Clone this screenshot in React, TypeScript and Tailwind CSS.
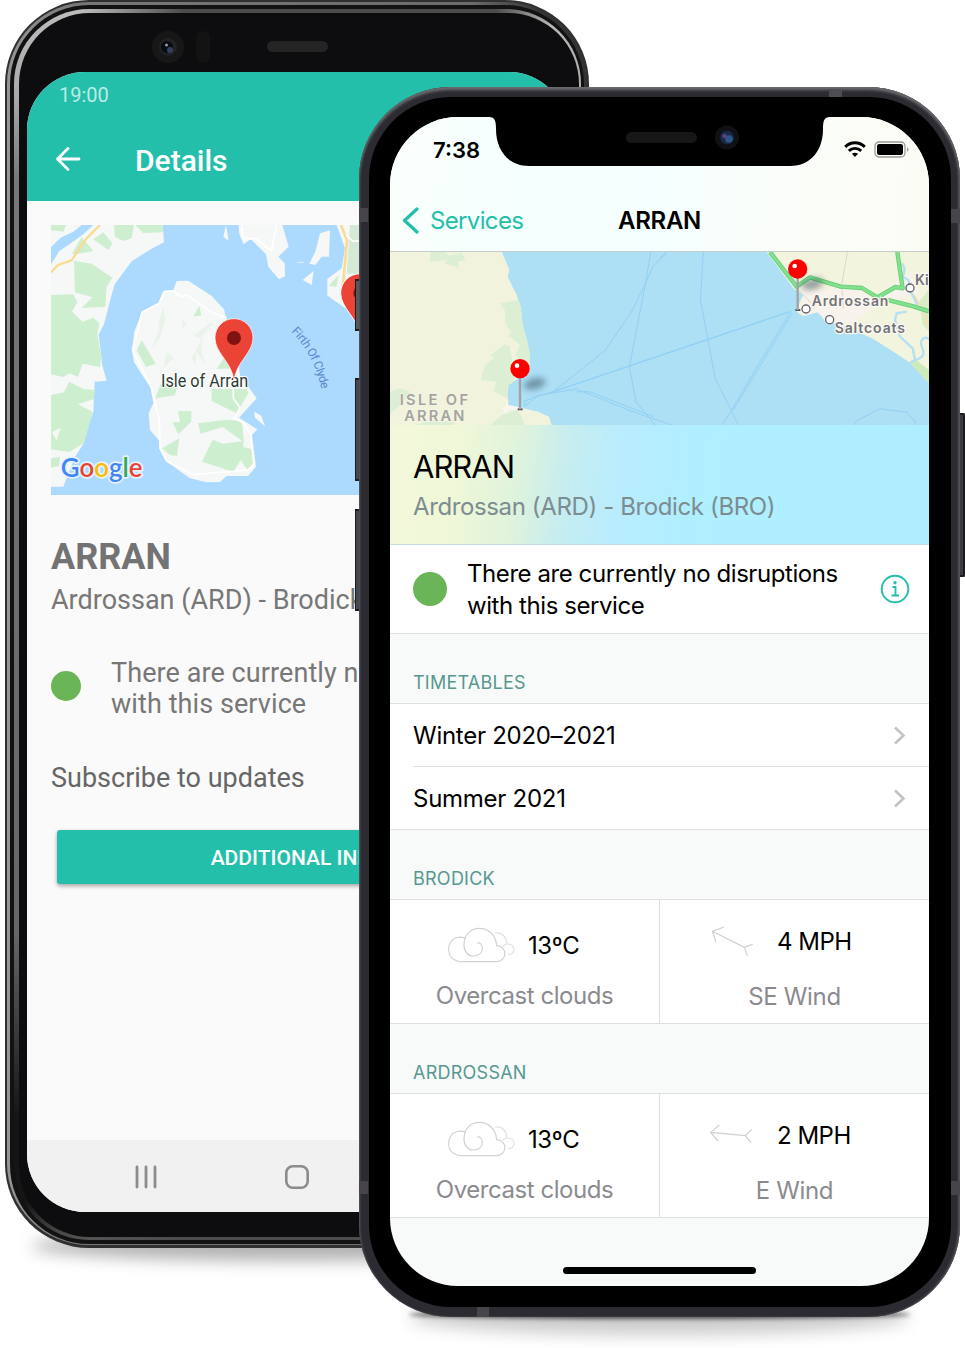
import type { ReactNode } from 'react';

function GoogleMap() {
  return (
    <svg className="block h-[270px] w-[492px]" viewBox="33 30 1476 810" preserveAspectRatio="none">
      <rect x="33" y="30" width="1476" height="810" fill="#acdaff" />
      <path d="M33 30H368L372 82L340 98L276 138L224 208L212 250L192 328L176 358L184 425L186 448L200 497L164 500L160 590L146 630L132 684L105 725L70 815L33 815Z" fill="#f6f7f7" />
      <path d="M33 96L62 68L100 50L125 30H160L130 58L85 90L58 108L33 148Z" fill="#acdaff" />
      <g fill="#cdeecf">
        <path d="M33 30H78L70 50L33 46Z" />
        <path d="M95 118L125 66L160 108L125 115Z" />
        <path d="M160 73L190 52L218 86L205 105Z" />
        <path d="M222 30H282L275 70L250 78L225 65Z" />
        <path d="M286 30H368V52L310 54Z" />
        <path d="M102 137L155 146L217 188L200 215L196 275L125 279L158 247L105 232Z" />
        <path d="M33 240L100 238L112 262L96 290L128 320L160 308L178 325L172 358L184 425L180 456L128 446L114 485L88 475L70 486L33 478Z" />
        <path d="M33 540L72 532L88 500L130 522L164 525L162 552L113 568L158 590L132 684L88 711L33 703Z" />
        <path d="M33 730L60 725L58 752L33 758Z" />
      </g>
      <path d="M36 652L62 638L50 676Z" fill="#f6f7f7" />
      <path d="M33 172L54 150L95 136L138 72L180 30" fill="none" stroke="#f9dc8e" strokeWidth="7" />
      <path d="M410 198L445 197L515 243L552 283L560 315L590 400L600 480L650 550L597 608L652 643L636 660L648 755L624 783H560L540 801L500 802L450 790L380 740L360 705L360 680L330 645L326 595L340 565L332 518L282 442L276 405L283 350L306 292L355 265L370 227L400 225Z" fill="#f6f7f7" />
      <g fill="#cdeecf">
        <path d="M305 376L347 446L318 456L290 406Z" />
        <path d="M362 506L412 518L404 541L346 550Z" />
        <path d="M414 589L454 588V620L415 658L397 621L420 622Z" />
        <path d="M478 273L484 302L460 304Z" />
        <path d="M558 420L590 460L530 462Z" />
        <path d="M515 522L620 522L625 535L590 595L515 558Z" />
        <path d="M474 625L562 614L605 618L612 682L548 636L482 656Z" />
        <path d="M518 674L548 686L610 678V696L634 702L640 742L622 764L602 735L580 770L486 740Z" />
        <path d="M366 700L418 670L411 723L390 720Z" />
      </g>
      <g fill="#eaf3e9">
        <path d="M370 278L377 310L360 370L335 400L355 350L358 310Z" />
        <path d="M425 315L440 325L428 342Z" />
        <path d="M460 362L510 323L520 326L480 370Z" />
        <path d="M490 360L483 400L495 450L470 410L465 450L455 430Z" />
        <path d="M380 410L400 430L370 460Z" />
      </g>
      <path d="M374 230L400 228L424 246L440 240L512 290L560 310M370 238L357 265L306 292L278 405L334 518L358 616L360 700L380 738L460 779L624 765L642 750L632 660L612 625L583 610L600 578L580 550V520" fill="none" stroke="#fff" strokeWidth="5" strokeLinejoin="round" />
      <path d="M642 590L664 602L675 634L645 608Z" fill="#f6f7f7" />
      <path d="M596 30L598 58L611 88L632 72L678 118L685 155L717 193L735 184L734 145L715 125L746 95L727 30ZM558 30L550 65L566 77ZM840 55L870 46L867 125H845L826 150L808 146L826 110ZM821 168L788 195L815 210Z" fill="#f6f7f7" />
      <path d="M604 36L610 70L650 72L694 108L710 30" fill="none" stroke="#fff" strokeWidth="5" />
      <path d="M772 142H792" stroke="#dceeff" strokeWidth="3" />
      <path d="M890 30H1509V840H1030L1000 500L930 290L862 242V192L905 160L915 100Z" fill="#f6f7f7" />
      <path d="M862 242L930 290L990 360L1030 840H900V300Z" fill="#acdaff" />
      <path d="M930 30H1000V176H920Z" fill="#d5ead6" />
      <path d="M896 180L890 215L866 212Z" fill="#cdeecf" />
      <path d="M903 30L921 76L909 210" fill="none" stroke="#f9dc8e" strokeWidth="8" />
      <path d="M918 60L938 78H965" fill="none" stroke="#fff" strokeWidth="5" />
      <path d="M960 362C955 310 902 280 902 234A58 58 0 0 1 1018 234C1018 280 965 310 960 362Z" fill="#eb4336" stroke="#fff" strokeWidth="3" />
      <circle cx="960" cy="234" r="20" fill="#7e1311" />
      <path id="firth" d="M754 350Q830 425 852 560" fill="none" />
      <text fill="#5b86cf" fontSize="36" fontFamily="Roboto, sans-serif" letterSpacing="-1.5"><textPath href="#firth">Firth Of Clyde</textPath></text>
      <text x="363" y="515" fill="#2b3b31" stroke="#fff" strokeWidth="6" paintOrder="stroke" fontSize="53" textLength="262" lengthAdjust="spacingAndGlyphs" fontFamily="Roboto, sans-serif">Isle of Arran</text>
      <path d="M582 498C576 440 525 415 525 368A57 57 0 0 1 639 368C639 415 588 440 582 498Z" fill="#eb4336" stroke="#fff" strokeWidth="2" />
      <circle cx="582" cy="369" r="21" fill="#7e1311" />
      <text x="62" y="786" fontSize="78" textLength="245" lengthAdjust="spacingAndGlyphs" fontFamily="Lato, 'Open Sans', sans-serif" fontWeight="600" stroke="#e6f3ff" strokeWidth="10" strokeLinejoin="round" paintOrder="stroke">
        <tspan fill="#4285f4">G</tspan><tspan fill="#ea4335">o</tspan><tspan fill="#fbbc05">o</tspan><tspan fill="#4285f4">g</tspan><tspan fill="#34a853">l</tspan><tspan fill="#ea4335">e</tspan>
      </text>
    </svg>
  );
}

function Pin({ x, y, h }: { x: number; y: number; h: number }) {
  return (
    <g>
      <ellipse cx={x + 44} cy={y + 45} rx="34" ry="16" fill="#33475a" opacity="0.5" filter="url(#soft)" transform={`rotate(-14 ${x + 44} ${y + 45})`} />
      <path d={`M${x - 7} ${y + h}H${x + 8}`} stroke="#555" strokeWidth="6" />
      <path d={`M${x} ${y}V${y + h}`} stroke="#a3a3a5" strokeWidth="7" />
      <circle cx={x} cy={y} r="29" fill="#fc0000" />
      <circle cx={x - 9} cy={y - 9} r="7" fill="#fff" />
    </g>
  );
}

function AppleMap() {
  return (
    <svg className="block h-[173px] w-[539px] shrink-0" viewBox="30 21 1617 519" preserveAspectRatio="none">
      <defs><filter id="soft" x="-50%" y="-80%" width="200%" height="260%"><feGaussianBlur stdDeviation="9" /></filter></defs>
      <rect x="30" y="21" width="1617" height="519" fill="#addff5" />
      <g fill="none" stroke="#92d0f3" strokeWidth="3">
        <path d="M432 486L470 455L520 440L675 317L752 205L792 125L820 62L860 24" />
        <path d="M812 21L795 125L748 365L768 470L825 540" />
        <path d="M520 440L1230 200" strokeWidth="4" />
        <path d="M434 480V468L480 450L590 432L750 497L880 542M590 440H628L820 515" />
        <path d="M970 21L961 165L1006 400L1075 540" />
        <path d="M1232 200L1140 350L1055 495L1026 540M1236 205L1060 495" />
        <path d="M1422 540L1430 527L1500 491L1580 502L1606 530V540M840 38L858 22" />
      </g>
      <path d="M30 21H366L388 75L383 95L410 150L422 185L428 240L442 290L449 325V360L408 405L385 420L382 455L386 470L380 490L430 490L475 500L507 515L515 540H30Z" fill="#f2f3dc" />
      <g fill="#dcefd5">
        <path d="M150 21H195L210 32L245 22L257 45L233 50L236 68L192 55L205 45L150 50Z" />
        <path d="M361 175L414 164L422 185L428 240L442 290L449 325V360L430 350L405 330L420 300L390 275H380L396 262L378 240L374 195Z" />
        <path d="M374 298L388 302L396 340L395 385L405 400L382 424V460L340 438L350 410L302 404L315 360L342 340L333 330Z" />
        <path d="M30 440L60 430L95 442L55 485L30 508ZM105 540L150 528L222 530V540ZM332 540L365 510L410 494L425 515L434 540Z" />
      </g>
      <path d="M375 455L380 482L366 490L378 506L390 493L430 500V488L385 480Z" fill="#f8f6f1" />
      <path d="M1160 21H1647V415L1610 375L1590 353L1540 320L1480 282L1400 245L1340 228L1310 200L1275 210L1268 213L1250 200L1262 160L1215 95Z" fill="#f3f4de" />
      <path d="M1262 120L1292 135L1430 130L1480 160L1520 130L1590 85L1620 140L1500 180L1420 230L1372 230L1340 238L1332 225L1318 200L1275 212L1258 200L1268 160Z" fill="#f8f2ec" />
      <path d="M1240 130L1270 150L1254 180L1240 178Z" fill="#addff5" />
      <path d="M1648 130L1618 170L1628 240L1648 260Z" fill="#d9ecc5" />
      <path d="M1590 353L1610 346L1647 375V415Z" fill="#ccebb9" />
      <path d="M1402 22L1385 120L1390 190M1255 135L1300 180" stroke="#d9d9cd" strokeWidth="3" fill="none" />
      <path d="M1603 150L1636 210L1647 250" stroke="#fbdcae" strokeWidth="5" fill="none" />
      <path d="M1590 353L1605 345L1598 310L1560 275L1545 225L1550 205L1580 200M1605 345C1660 330 1605 300 1630 280Q1645 275 1647 285M1565 55Q1580 70 1568 95L1585 105L1595 145L1612 180" stroke="#b3e0f3" strokeWidth="7" fill="none" />
      <g fill="none" strokeLinejoin="round">
        <path d="M1170 21L1250 125L1290 97L1382 125L1446 129L1492 157L1600 184L1647 199M1492 157L1546 126L1568 130L1552 21" stroke="#64cc76" strokeWidth="13" />
        <path d="M1170 21L1250 125L1290 97L1382 125L1446 129L1492 157L1600 184L1647 199M1492 157L1546 126L1568 130L1552 21" stroke="#83e18e" strokeWidth="8" />
      </g>
      <Pin x={420} y={371} h={122} />
      <Pin x={1253} y={72} h={123} />
      <g fill="#fff" stroke="#646467" strokeWidth="4">
        <circle cx="1278" cy="192" r="12" /><circle cx="1349" cy="224" r="12" /><circle cx="1590" cy="129" r="12" />
      </g>
      <g fontFamily="Inter, sans-serif" fill="#737378" stroke="#fbf9f2" strokeWidth="7" strokeLinejoin="round" paintOrder="stroke" fontSize="42" fontWeight="600">
        <text x="1295" y="184" textLength="230">Ardrossan</text>
        <text x="1364" y="263" textLength="211">Saltcoats</text>
        <text x="1605" y="121">Ki</text>
      </g>
      <g fontFamily="Inter, sans-serif" fill="#a4a49d" stroke="#f5f5e8" strokeWidth="5" paintOrder="stroke" fontSize="44" fontWeight="600">
        <text x="59" y="480" textLength="205">ISLE OF</text>
        <text x="73" y="528" textLength="180">ARRAN</text>
      </g>
    </svg>
  );
}

function AndroidPhone() {
  return (
    <div className="absolute left-[5px] top-0 h-[1248px] w-[584px]">
      <div className="absolute inset-x-[26px] bottom-[-13px] h-[30px] rounded-[50%] bg-black/30 blur-[8px]" />
      <div className="relative h-full rounded-[84px] bg-[#303030] p-[2px] pb-[3px]">
        <div className="h-full rounded-[82px] bg-[linear-gradient(90deg,#969696_0%,#777_12%,#6c6c6c_80%,#333_92%)] p-[3px] pb-px">
          <div className="h-full rounded-[79px] bg-[#121212] pb-[4px] pl-[4px] pr-[3px] pt-[4px]">
            <div className="h-full rounded-[75px] bg-[linear-gradient(90deg,transparent_12%,#4c4c4c_30%,#4c4c4c_85%,transparent_95%),linear-gradient(180deg,#bcbcbc_0%,#aaa_7%,#777_14%,#666_75%,#151515_90%,#151515_97%,#555_100%)] pb-[3px] pl-[5px] pr-[2px] pt-[4px]">
              <div className="h-full rounded-[71px] bg-[#0d0d0f]" />
            </div>
          </div>
        </div>
      </div>
      <div className="absolute left-[147px] top-[31px] flex h-[32px] w-[220px] items-center">
        <svg className="h-8 w-8" viewBox="0 0 32 32"><circle cx="16" cy="16" r="16" fill="#171717" /><circle cx="16" cy="16" r="9" fill="#222225" /><circle cx="15" cy="16" r="6" fill="#090b12" /><circle cx="18" cy="19" r="3" fill="#35405f" /><circle cx="14.500" cy="14" r="1.500" fill="#99a" /></svg>
        <div className="ml-[12px] h-[32px] w-[14px] rounded-full bg-[#131314]" />
        <div className="mb-[2px] ml-[57px] h-[11px] w-[61px] shrink-0 rounded-full bg-[#242425]" />
      </div>
      <div className="absolute left-[22px] top-[72px] flex h-[1140px] w-[540px] flex-col overflow-hidden rounded-[58px] bg-[#fafafa] font-[Roboto,sans-serif]">
        <div className="h-[129px] shrink-0 bg-[#23bfab] text-white">
          <div className="flex h-[46px] items-center justify-between pl-[32px] pr-[26px] text-[20px] text-white/70">
            <span>19:00</span>
            <svg className="mb-px h-4 w-[84px]" viewBox="0 0 84 16"><path d="M2 14V1M9 14V1M14 2H28M70 4L76 0L82 4V15H70Z" fill="none" stroke="#8edbd1" strokeWidth="1.500" /></svg>
          </div>
          <div className="flex h-[81px] items-center pl-[28px]">
            <svg className="h-[26px] w-[26px]" viewBox="0 0 26 26" fill="none" stroke="white" strokeWidth="2.800" strokeLinecap="round" strokeLinejoin="round"><path d="M24 13H2.500M13 2.500L2.500 13L13 23.500" /></svg>
            <h2 className="ml-[54px] pt-[3px] text-[30px] font-medium">Details</h2>
          </div>
        </div>
        <div className="ml-[24px] mt-[24px] h-[270px] w-[492px] shrink-0 overflow-hidden"><GoogleMap /></div>
        <h1 className="ml-[24px] mt-[40px] h-[44px] text-[36px] font-bold leading-[44px] text-[#737373]">ARRAN</h1>
        <p className="ml-[24px] mt-px h-[40px] whitespace-nowrap text-[27px] leading-[40px] text-[#777]">Ardrossan (ARD) - Brodick (BRO)</p>
        <div className="ml-[24px] mt-[37px] flex h-[64px] items-center">
          <div className="mb-[6px] h-[30px] w-[30px] rounded-full bg-[#6ab557]" />
          <p className="ml-[30px] whitespace-nowrap text-[27px] leading-[31.500px] tracking-[0.08px] text-[#777]">There are currently no disruptions<br />with this service</p>
        </div>
        <p className="ml-[24px] mt-[37px] h-[40px] text-[27px] leading-[40px] text-[#666]">Subscribe to updates</p>
        <button className="ml-[30px] mt-[32px] h-[54px] w-[480px] shrink-0 rounded-[3px] bg-[#23bfab] pt-[3px] text-[21px] font-medium text-white shadow-[0_2px_4px_rgba(0,0,0,0.35)]">ADDITIONAL INFO</button>
        <div className="mt-auto flex h-[72px] shrink-0 justify-around bg-[#f1f1f1] px-[44px] pt-[24px]">
          <svg className="h-[26px] w-[26px]" viewBox="0 0 26 26" stroke="#8c8c8c" strokeWidth="2.800" strokeLinecap="round"><path d="M4 3V23M13 3V23M22 3V23" /></svg>
          <svg className="h-[26px] w-[26px]" viewBox="0 0 26 26" fill="none" stroke="#8c8c8c" strokeWidth="2.600"><rect x="2.300" y="2.300" width="21.400" height="21.400" rx="6.500" /></svg>
          <svg className="h-[26px] w-[26px]" viewBox="0 0 26 26" fill="none" stroke="#8c8c8c" strokeWidth="2.600"><path d="M17 3L7 13L17 23" /></svg>
        </div>
      </div>
    </div>
  );
}

function SectionLabel({ children }: { children: ReactNode }) {
  return <div className="flex h-[69px] shrink-0 items-center pl-[23px] pt-[28px] text-[18px] tracking-[0.25px] text-[#57988f]">{children}</div>;
}

function TimetableRow({ label }: { label: string }) {
  return (
    <div className="flex h-[62px] items-center justify-between pr-[23px] text-[24px] tracking-[-0.27px]">
      <span className="pt-px">{label}</span>
      <svg className="h-[19px] w-[13px]" viewBox="0 0 13 19" fill="none" stroke="#c3c3c6" strokeWidth="2.600"><path d="M2 1.500L10.500 9.500L2 17.500" /></svg>
    </div>
  );
}

function Clouds() {
  return (
    <svg className="-mt-[2px] h-[36px] w-[68px]" viewBox="0 0 204 108" fill="none" stroke="#d2d2d4" strokeWidth="3.500" strokeLinecap="round">
      <path d="M49 32C20 24 2 44 2 68C2 90 18 104 42 104H144C178 104 180 57 146 56C143 22 120 4 95 4C67 4 48 24 48 54C48 74 60 87 76 87C94 87 104 76 103 63C102 52 96 46 88 48" />
      <path d="M142 18C165 15 176 32 176 51C204 50 204 82 182 83M176 51C171 51 168 54 166 58" stroke="#e2e2e3" />
    </svg>
  );
}

function Weather({ speed, wind, path }: { speed: string; wind: string; path: string }) {
  return (
    <div className="grid h-[125px] shrink-0 grid-cols-[270px_1fr] border-y border-[#dedfe1] bg-white text-[24px]">
      <div className="border-r border-[#dedfe1] pt-[27px]">
        <div className="flex h-[38px] items-center pl-[58px]">
          <Clouds />
          <span className="ml-[12px] tracking-[-0.4px]">13ºC</span>
        </div>
        <p className="mt-[16px] text-center leading-[30px] tracking-[-0.44px] text-[#8b8b8f]">Overcast clouds</p>
      </div>
      <div className="pt-[23px]">
        <div className="flex h-[38px] items-center pl-[50px]">
          <svg className="h-[36px] w-[46px]" viewBox="0 0 138 108" fill="none" stroke="#cfcfd0" strokeWidth="3.500"><path d={path} /></svg>
          <span className="ml-[21px] tracking-[-0.5px]">{speed}</span>
        </div>
        <p className="mt-[21px] text-center leading-[30px] tracking-[-0.35px] text-[#8b8b8f]">{wind}</p>
      </div>
    </div>
  );
}

function IPhone() {
  return (
    <div className="absolute left-[359px] top-[87px] h-[1230px] w-[601px]">
      <div className="absolute bottom-[-18px] left-[50px] right-[50px] h-[36px] rounded-[50%] bg-black/20 blur-[8px]" />
      <div className="absolute bottom-[-2px] left-[50px] right-[50px] h-[9px] rounded-[50%] bg-black/60 blur-[2px]" />
      <div className="absolute left-[-4px] top-[192px] h-[52px] w-[8px] border-y-2 border-l border-[#1c1c20] bg-[#55585b]" />
      <div className="absolute left-[-4px] top-[291px] h-[103px] w-[8px] border-y-2 border-l border-[#1c1c20] bg-[#45484c]" />
      <div className="absolute left-[-4px] top-[422px] h-[102px] w-[8px] border-y-2 border-l border-[#1c1c20] bg-[#45484c]" />
      <div className="absolute right-[-5px] top-[326px] h-[164px] w-[8px] rounded-[2px] border-y-2 border-r-2 border-[#1c1c20] bg-[#3c3c42]" />
      <div className="relative h-full overflow-hidden rounded-[92px] bg-[#2b2b31] shadow-[inset_0_3px_3px_#6c6c70,inset_1px_0_2px_#45454c,inset_-2px_0_2px_#4b4b52]">
        <div className="absolute left-0 top-[121px] h-[14px] w-[9px] bg-[#47454a]" />
        <div className="absolute left-0 top-[1094px] h-[13px] w-[9px] bg-[#47454a]" />
        <div className="absolute right-0 top-[122px] h-[14px] w-[9px] bg-[#47454a]" />
        <div className="absolute right-0 top-[1094px] h-[14px] w-[9px] bg-[#47454a]" />
        <div className="absolute left-[470px] top-[2px] h-[8px] w-[13px] bg-[#4f4d52]" />
        <div className="absolute bottom-0 left-[118px] h-[10px] w-[12px] bg-[#47454a]" />
        <div className="absolute inset-y-[10px] left-[10px] right-[9px] rounded-[82px] bg-black" />
      </div>
      <div className="absolute left-[31px] top-[30px] flex h-[1169px] w-[539px] flex-col overflow-hidden rounded-[68px] bg-[#f8fafa] font-[Inter,sans-serif] text-black">
        <div className="h-[135px] shrink-0 border-b border-[#c4cccc] bg-[linear-gradient(92deg,#fafffb_0%,#f6fffe_18%,#f5ffff_50%,#fafdf9_72%,#fcfcf5_100%)]">
          <div className="flex h-[66px] items-center justify-between pl-[43px] pr-[20px]">
            <span className="text-[22px] font-semibold">7:38</span>
            <div className="mb-[2px] flex items-center gap-[8px]">
              <svg className="h-[17px] w-[22px]" viewBox="0 0 22 17" fill="none" stroke="#000" strokeWidth="3"><path d="M1.200 5.800C7 .5 15 .5 20.800 5.800M4.800 9.800C8.500 6.600 13.500 6.600 17.200 9.800" /><path d="M11 16L7.900 12.800Q11 10.500 14.100 12.800Z" fill="#000" stroke="none" /></svg>
              <svg className="h-[17px] w-[35px]" viewBox="0 0 35 17"><rect x="1" y="1" width="30" height="15" rx="4" fill="none" stroke="#999" strokeWidth="1.300" /><rect x="3" y="3" width="26" height="11" rx="2.200" /><path d="M33 6Q36 8.500 33 11Z" fill="#999" /></svg>
            </div>
          </div>
          <div className="grid h-[68px] grid-cols-[1fr_auto_1fr] items-center pt-[7px]">
            <div className="flex items-center pl-[12px] text-[#23bfab]">
              <svg className="h-[28px] w-[17px]" viewBox="0 0 17 28" fill="none" stroke="currentColor" strokeWidth="3.200" strokeLinecap="round" strokeLinejoin="round"><path d="M15 2L2.500 13.500L15 25" /></svg>
              <span className="ml-[11px] text-[24px] tracking-[-0.65px]">Services</span>
            </div>
            <h2 className="text-[24px] font-semibold tracking-[-0.3px]">ARRAN</h2>
            <span />
          </div>
        </div>
        <AppleMap />
        <div className="h-[120px] shrink-0 border-b border-[#c8dde0] bg-[linear-gradient(97deg,#f4f8da_0%,#eef7d8_14%,#dff3dc_24%,#c6edf0_33%,#b8ecfe_43%,#afefff_58%,#aeeeff_100%)] pl-[23px] pt-[21px]">
          <h1 className="text-[31px] leading-[42px] tracking-[-1px]">ARRAN</h1>
          <p className="text-[24px] leading-[37px] tracking-[-0.38px] text-[#7c8c91]">Ardrossan (ARD) - Brodick (BRO)</p>
        </div>
        <div className="flex h-[89px] shrink-0 items-center border-b border-[#dedfe1] bg-white pl-[23px] pr-[19px]">
          <div className="h-[34px] w-[34px] rounded-full bg-[#6ab557]" />
          <p className="ml-[20px] whitespace-nowrap pt-px text-[24px] leading-[32px] tracking-[-0.43px]">There are currently no disruptions<br />with this service</p>
          <svg className="ml-auto h-[30px] w-[30px]" viewBox="0 0 30 30" fill="none" stroke="#23bfab" strokeWidth="1.900"><circle cx="15" cy="15" r="13.300" /><path d="M12.500 13H15.500V21.500M11.500 21.500H19" /><circle cx="15" cy="8.800" r="1.700" fill="#23bfab" stroke="none" /></svg>
        </div>
        <SectionLabel>TIMETABLES</SectionLabel>
        <div className="h-[127px] shrink-0 border-y border-[#dedfe1] bg-white pl-[23px]">
          <TimetableRow label="Winter 2020–2021" />
          <div className="h-px bg-[#dedfe1]" />
          <TimetableRow label="Summer 2021" />
        </div>
        <SectionLabel>BRODICK</SectionLabel>
        <Weather speed="4 MPH" wind="SE Wind" path="M7 22L103 70L128 61M103 70L112 95M42 9L7 22L18 54" />
        <SectionLabel>ARDROSSAN</SectionLabel>
        <Weather speed="2 MPH" wind="E Wind" path="M2 43L106 53L126 34M106 53L123 73M28 21L2 43L24 69" />
        <div className="mx-auto mb-[12px] mt-auto h-[7px] w-[193px] shrink-0 rounded-full bg-black" />
      </div>
      <svg className="absolute left-[121px] top-[29px] h-[51px] w-[360px]" viewBox="0 0 360 51">
        <path d="M0 0H360V1H350C344 1 343 5 343 13C343 34 331 50 310 50H49C28 50 16 34 16 13C16 5 15 1 9 1H0Z" />
        <rect x="146" y="16" width="71" height="11" rx="5.500" fill="#171717" />
        <circle cx="247" cy="21.500" r="12" fill="#101114" /><circle cx="247" cy="21.500" r="6.800" fill="#18294a" /><circle cx="249" cy="23" r="3.800" fill="#2c5687" /><circle cx="244.500" cy="20" r="2.300" fill="#5b3e83" />
      </svg>
    </div>
  );
}

export default function App() {
  return (
    <main className="relative h-[1348px] w-[965px] overflow-hidden bg-white">
      <AndroidPhone />
      <IPhone />
    </main>
  );
}
